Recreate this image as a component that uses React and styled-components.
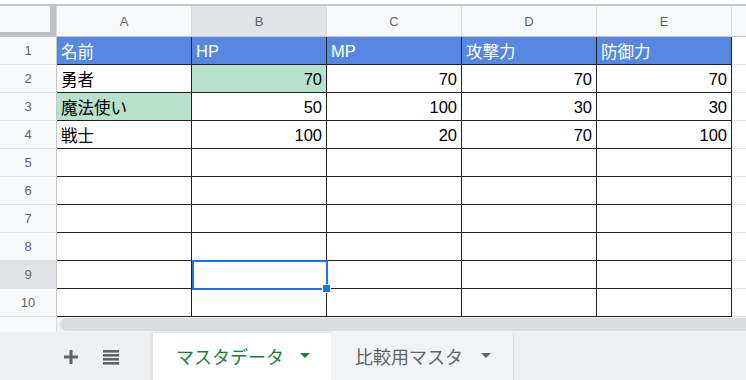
import React from "react";
import styled, { createGlobalStyle } from "styled-components";

const FONT = `"Liberation Sans", Arial, "Noto Sans CJK JP", sans-serif`;

const GlobalStyle = createGlobalStyle`
	html, body {
		margin: 0;
		padding: 0;
	}
	body {
		width: 746px;
		height: 380px;
		overflow: hidden;
		background: #fff;
		font-family: ${FONT};
	}
`;

const COLS = ["A", "B", "C", "D", "E"];

const ROWS = [
	{ cells: ["名前", "HP", "MP", "攻撃力", "防御力"], head: true },
	{ cells: ["勇者", 70, 70, 70, 70], fill: [null, "#b7e1cd"] },
	{ cells: ["魔法使い", 50, 100, 30, 30], fill: ["#b7e1cd"] },
	{ cells: ["戦士", 100, 20, 70, 100] },
	{ cells: [] },
	{ cells: [] },
	{ cells: [] },
	{ cells: [] },
	{ cells: [] },
	{ cells: [] },
];

const SELECTED = { row: 9, col: 1 };

function PlusIcon() {
	return (
		<svg width="14" height="14" viewBox="0 0 14 14">
			<path d="M7 0v14M0 7h14" stroke="#5f6368" strokeWidth="3" fill="none" />
		</svg>
	);
}

function ListIcon() {
	return (
		<svg width="16" height="15" viewBox="0 0 16 15">
			{[0, 4, 8, 12].map((y) => (
				<rect key={y} x="0" y={y} width="16" height="2.6" fill="#5f6368" />
			))}
		</svg>
	);
}

export default function App() {
	return (
		<Page>
			<GlobalStyle />
			<Sheet>
				<Corner />
				{COLS.map((c, i) => (
					<ColHead key={c} $active={i === SELECTED.col}>
						{c}
					</ColHead>
				))}
				<ColHead $edge />

				{ROWS.map((row, r) => (
					<React.Fragment key={r}>
						<RowHead $active={r + 1 === SELECTED.row}>{r + 1}</RowHead>
						{COLS.map((c, i) => {
							const value = row.cells[i];
							const isSel = r + 1 === SELECTED.row && i === SELECTED.col;
							return (
								<Cell
									key={c}
									$fill={row.head ? "#5687e1" : row.fill && row.fill[i]}
									$head={row.head}
									$num={typeof value === "number"}
								>
									{value}
									{isSel && (
										<Selection>
											<Handle />
										</Selection>
									)}
								</Cell>
							);
						})}
						<Cell $edge />
					</React.Fragment>
				))}
			</Sheet>

			<ScrollRow>
				<ScrollCorner />
				<Track>
					<Thumb />
				</Track>
			</ScrollRow>

			<TabBar>
				<Tools>
					<PlusIcon />
					<ListIcon />
				</Tools>
				<Tab $active>
					マスタデータ
					<Caret $active />
				</Tab>
				<Tab>
					比較用マスタ
					<Caret />
				</Tab>
			</TabBar>
		</Page>
	);
}

const Page = styled.div`
	padding-top: 4px;
	width: 746px;
	height: 380px;
	box-sizing: border-box;
	display: flex;
	flex-direction: column;
`;

const Sheet = styled.div`
	display: grid;
	grid-template-columns: 57px repeat(5, 135px) 1fr;
	border-top: 2px solid #c4c7c5;
`;

const Corner = styled.div`
	height: 31px;
	box-sizing: border-box;
	background: #f8f9fa;
	border-right: 1px solid #dadce0;
	border-bottom: 1px solid #c4c7c5;
	box-shadow: inset -6px -4px 0 #bfc1c3;
`;

const ColHead = styled.div`
	height: 31px;
	box-sizing: border-box;
	display: flex;
	align-items: center;
	justify-content: center;
	background: ${(p) => (p.$active ? "#e1e3e6" : "#f8f9fa")};
	border-right: ${(p) => (p.$edge ? "none" : "1px solid #dadce0")};
	border-bottom: 1px solid #c4c7c5;
	color: #5f6368;
	font-size: 13px;
`;

const RowHead = styled.div`
	height: 28px;
	box-sizing: border-box;
	display: flex;
	align-items: center;
	justify-content: center;
	background: ${(p) => (p.$active ? "#e1e3e6" : "#f8f9fa")};
	border-right: 1px solid #c4c7c5;
	border-bottom: 1px solid #e2e3e3;
	color: #5f6368;
	font-size: 13px;
`;

const Cell = styled.div`
	position: relative;
	height: 28px;
	box-sizing: border-box;
	display: flex;
	align-items: center;
	justify-content: ${(p) => (p.$num ? "flex-end" : "flex-start")};
	padding: 1px 4px 0;
	background: ${(p) => p.$fill || "#fff"};
	color: ${(p) => (p.$head ? "#fff" : "#000")};
	border-right: ${(p) => (p.$edge ? "none" : "1px solid #222")};
	border-bottom: 1px solid ${(p) => (p.$edge ? "#e2e3e3" : "#222")};
	font-size: 16.5px;
	white-space: nowrap;
`;

const Selection = styled.div`
	position: absolute;
	top: -1px;
	left: 0;
	right: -2px;
	bottom: -2px;
	border: 2px solid #1a73e8;
	z-index: 2;
	pointer-events: none;
`;

const Handle = styled.div`
	position: absolute;
	right: -5px;
	bottom: -5px;
	width: 7px;
	height: 7px;
	background: #1a73e8;
	border: 1px solid #fff;
`;

const ScrollRow = styled.div`
	display: flex;
	height: 15px;
`;

const ScrollCorner = styled.div`
	width: 57px;
	box-sizing: border-box;
	background: #f8f9fa;
	border-right: 1px solid #dadce0;
`;

const Track = styled.div`
	flex: 1;
	background: #f1f3f4;
	padding: 1px 0 1px 3px;
	display: flex;
`;

const Thumb = styled.div`
	flex: 1;
	background: #dadce0;
	border-radius: 7px 0 0 7px;
`;

const TabBar = styled.div`
	flex: 1;
	display: flex;
	align-items: stretch;
	background: #eef0f1;
`;

const Tools = styled.div`
	width: 153px;
	box-sizing: border-box;
	display: flex;
	align-items: center;
	gap: 25px;
	padding-left: 64px;
	padding-top: 2px;
`;

const Tab = styled.div`
	display: flex;
	align-items: center;
	gap: ${(p) => (p.$active ? "16px" : "18px")};
	padding: ${(p) => (p.$active ? "0 21px 2px 23px" : "0 22px 2px 24px")};
	margin-top: 1px;
	font-size: 18px;
	color: ${(p) => (p.$active ? "#188038" : "#5f6368")};
	background: ${(p) => (p.$active ? "#fff" : "#f1f3f4")};
	box-shadow: ${(p) =>
		p.$active ? "0 1px 3px 1px rgba(60, 64, 67, 0.15)" : "none"};
	border-right: ${(p) => (p.$active ? "none" : "1px solid #dadce0")};
`;

const Caret = styled.span`
	width: 0;
	height: 0;
	border-left: 5px solid transparent;
	border-right: 5px solid transparent;
	border-top: 5px solid ${(p) => (p.$active ? "#188038" : "#5f6368")};
`;
